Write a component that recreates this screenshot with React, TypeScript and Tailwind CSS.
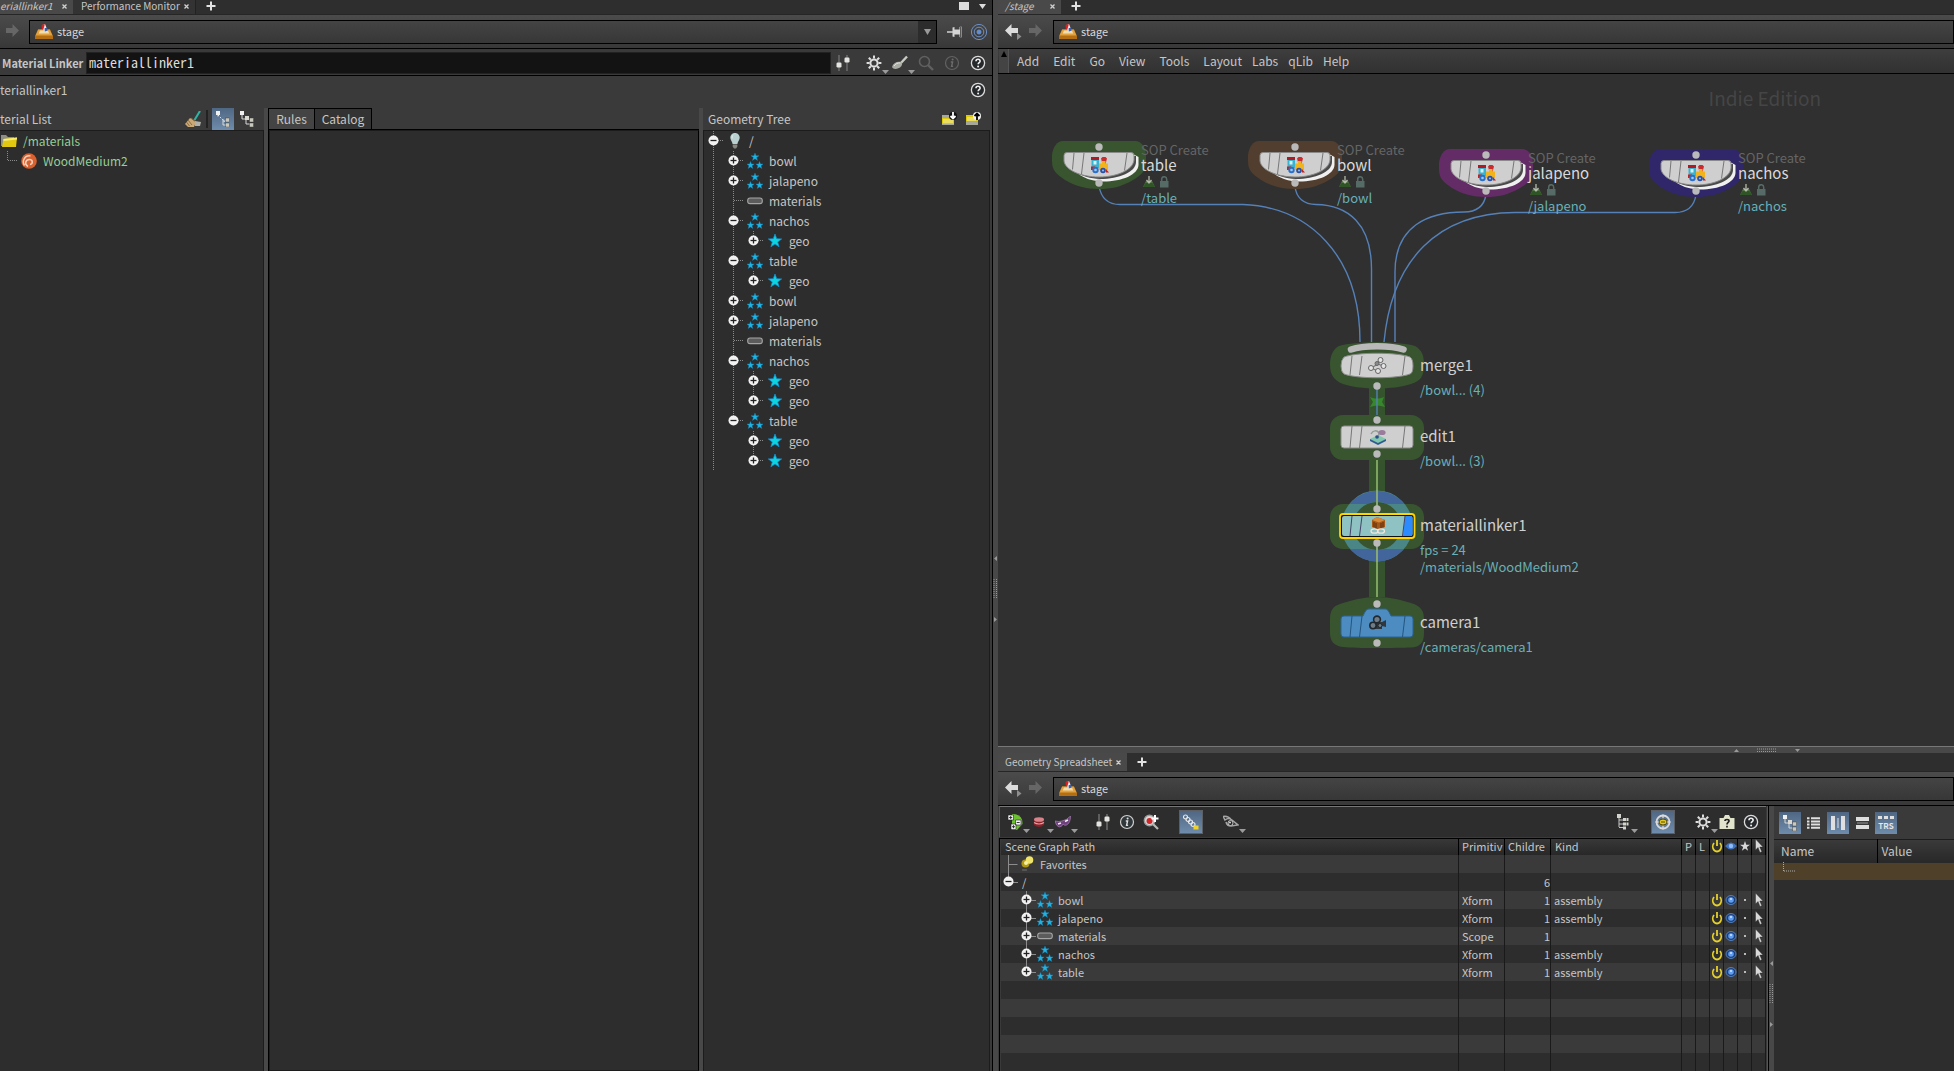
import type { ReactNode } from 'react';

type Children = { children?: ReactNode };

/* ---------- small shared icons ---------- */

const HelpIcon = () => (
  <svg width="16" height="16" viewBox="0 0 16 16" fill="none">
    <circle cx="8" cy="8" r="6.6" fill="#26292c" stroke="#dcdcdc" strokeWidth="1.3" />
    <path d="M6 6.3c0-1.3.9-2 2-2s2.1.7 2.1 1.9c0 1.5-1.9 1.5-1.9 3" stroke="#f0f0f0" strokeWidth="1.6" />
    <circle cx="8.1" cy="11.4" r="1" fill="#f0f0f0" />
  </svg>
);

const InfoIcon = ({ dim = false }: { dim?: boolean }) => (
  <svg width="16" height="16" viewBox="0 0 16 16" fill="none">
    <circle cx="8" cy="8" r="6.5" stroke={dim ? '#626262' : '#d0d0d0'} strokeWidth="1.2" fill={dim ? 'none' : '#30383c'} />
    <path d="M6.8 7h1.8L7.6 11.4h1.5" stroke={dim ? '#6c6c6c' : '#e0e0e0'} strokeWidth="1.4" />
    <circle cx="8.6" cy="4.6" r="1" fill={dim ? '#6c6c6c' : '#e0e0e0'} />
  </svg>
);

const SlidersIcon = () => (
  <svg width="16" height="16" viewBox="0 0 16 16">
    <path d="M4 0v16M12 0v16" stroke="#8f8f8f" strokeWidth="1.6" />
    <path d="M4 0v16M12 0v16" stroke="#1c1c1c" strokeWidth="0.6" />
    <rect x="1.5" y="7.5" width="5" height="5" rx="1.2" fill="#e4e4e0" />
    <rect x="9.5" y="2.5" width="5" height="5" rx="1.2" fill="#e4e4e0" />
  </svg>
);

const GearIcon = () => (
  <svg width="16" height="16" viewBox="0 0 16 16" fill="none" stroke="#dedede">
    <circle cx="8" cy="8" r="3.6" strokeWidth="2" />
    <path d="M8 .6v3M8 12.4v3M.6 8h3M12.4 8h3M2.8 2.8l2 2M11.2 11.2l2 2M2.8 13.2l2-2M11.2 4.8l2-2" strokeWidth="2" />
  </svg>
);

const StageIcon = () => (
  <svg width="18" height="16" viewBox="0 0 18 16">
    <path d="M3 5.5h12l3 6.5v3H0v-3z" fill="#b46f13" />
    <path d="M3.2 5.5h11.6l2.6 6H.6z" fill="#e2a23f" />
    <path d="M5 6.5h8l1.2 3H3.8z" fill="#f2dcae" />
    <path d="M7 1.2l3-1.2 2.6 6.6-3.6 1z" fill="#ececf2" />
    <path d="M6.6 1.6C7 .4 9 0 9.8.6L8.4 5.2 6.8 5z" fill="#d92222" />
    <path d="M9.6 4.2l2.4-.6.8 3-3 .8z" fill="#3d5fa8" />
  </svg>
);

const StarsIcon = () => (
  <svg width="16" height="16" viewBox="0 0 16 16" fill="#1fb4e2" stroke="#1685bd" strokeWidth="0.4">
    <path d="M8 0l1 2.7h3l-2.4 1.8.9 2.9L8 5.7 5.5 7.4l.9-2.9L4 2.7h3z" />
    <path d="M3.5 8.5l1 2.5h2.7L5 12.7l.8 2.8-2.3-1.6-2.3 1.6.8-2.8L0 11h2.6z" />
    <path d="M12.5 8.5l1 2.5h2.5L14 12.7l.8 2.8-2.3-1.6-2.3 1.6.8-2.8L8.9 11h2.7z" />
  </svg>
);

const StarIcon = () => (
  <svg width="16" height="16" viewBox="0 0 16 16">
    <path d="M8 1l1.700 4.700 5 .2-4 3.100 1.400 4.800L8 11l-4.100 2.800L5.300 9l-4-3.100 5-.2z" fill="#0bd3e0" stroke="#128fd6" strokeWidth="0.7" />
  </svg>
);

const ScopeIcon = () => (
  <svg width="16" height="16" viewBox="0 0 16 16">
    <rect x="0.7" y="5" width="14.6" height="5.6" rx="2.4" fill="#5c5c5c" stroke="#a5a5a5" strokeWidth="1.1" />
  </svg>
);

const BulbIcon = () => (
  <svg width="16" height="16" viewBox="0 0 16 16">
    <path d="M8 0c3 0 4.700 2.200 4.700 4.800 0 2.400-1.900 3.500-2.300 6.200H5.600C5.200 8.300 3.300 7.200 3.300 4.800 3.300 2.200 5 0 8 0z" fill="#b9d0d0" />
    <path d="M6.300 2c-1 .7-1.400 2-1.100 3.400" stroke="#e8f4f4" fill="none" />
    <path d="M5.700 11.500h4.600v2.300L9 15.500H7l-1.300-1.700z" fill="#878782" />
  </svg>
);

const CaretDown = () => (
  <svg className="absolute -right-1 bottom-0" width="7" height="4" viewBox="0 0 7 4">
    <path d="M0 0h7L3.500 4z" fill="#9b9b9b" />
  </svg>
);

const ArrowIcon = ({ back = false }: { back?: boolean }) => (
  <svg width="17" height="17" viewBox="0 0 17 17">
    {back ? (
      <>
        <path d="M0 7.500L6.500 1v4H13v5H6.500v4z" fill="#dcdcdc" />
        <path d="M12 10l4.500 3.500L12 17z" fill="#8e8e8e" />
      </>
    ) : (
      <path d="M14 7.500L7.500 1v4H1v5h6.500v4z" fill="#666" />
    )}
  </svg>
);

const TreeModeIcon = ({ dotted = false }: { dotted?: boolean }) => (
  <svg width="16" height="16" viewBox="0 0 16 16">
    {dotted ? (
      <path d="M3 4l7 7M3 4v3" stroke="#e8e8e8" strokeDasharray="1.5 1.5" />
    ) : (
      <path d="M3 4v4h4v5h5M7 8h2" stroke="#d8d8d8" fill="none" />
    )}
    {dotted && <path d="M8 8v6h3M8 10h3" stroke="#d8d8d8" fill="none" />}
    <rect x="1" y="0" width="4" height="4" fill="#f0f0f0" />
    {!dotted && <rect x="6" y="5" width="4" height="4" fill="#d8d8d0" />}
    <rect x="10.5" y="7" width="4" height="4" fill="#c9c9bf" stroke="#333" strokeWidth="0.4" />
    <rect x="10.5" y="12" width="4" height="4" fill="#c9c9bf" stroke="#333" strokeWidth="0.4" />
  </svg>
);

/* ---------- generic pieces ---------- */

type IconButtonProps = Children & { label: string; active?: boolean; framed?: boolean; menu?: boolean };

function IconButton({ label, active = false, framed = false, menu = false, children }: IconButtonProps) {
  return (
    <button
      type="button"
      aria-label={label}
      className={`relative flex h-[22px] w-[22px] shrink-0 items-center justify-center ${
        active ? 'bg-gradient-to-b from-[#4f6783] to-[#6f8cac]' : ''
      } ${framed ? 'ring-1 ring-[#5c5f63]' : ''}`}
    >
      {children}
      {menu && <CaretDown />}
    </button>
  );
}

function Tab({ label, className }: { label: string; className: string }) {
  return (
    <div className={`flex h-full items-center justify-between text-[10px] ${className}`}>
      <button type="button" className="whitespace-nowrap leading-[14px]">{label}</button>
      <button type="button" aria-label={`Close ${label}`}>
        <svg width="5" height="5" viewBox="0 0 5 5">
          <path d="M.5.5l4 4M4.500.5l-4 4" stroke="#d0d0d0" strokeWidth="1.3" />
        </svg>
      </button>
    </div>
  );
}

const AddTab = () => (
  <button type="button" aria-label="New tab" className="ml-[10px]">
    <svg width="10" height="10" viewBox="0 0 10 10">
      <path d="M5 .5v9M.5 5h9" stroke="#e2e2e2" strokeWidth="2" />
    </svg>
  </button>
);

function PathField({ id }: { id: string }) {
  return (
    <div className="relative flex h-6 min-w-0 flex-1 items-center border border-black bg-gradient-to-b from-[#444] to-[#373737] pl-[5px]">
      <StageIcon />
      <label htmlFor={id} className="sr-only">Path</label>
      <select id={id} className="h-full min-w-0 flex-1 appearance-none bg-transparent pb-[2px] pl-1 text-[11px] leading-[18px] text-[#d6d6d6] outline-none">
        <option>stage</option>
      </select>
    </div>
  );
}

function PathBar({ id }: { id: string }) {
  return (
    <div className="flex h-[34px] shrink-0 items-center border-b border-black bg-gradient-to-b from-[#4b4b4b] to-[#383838]">
      <button type="button" aria-label="Back" className="ml-[7px]"><ArrowIcon back /></button>
      <button type="button" aria-label="Forward" className="ml-[6px] mr-2"><ArrowIcon /></button>
      <PathField id={id} />
    </div>
  );
}

/* ---------- left pane ---------- */

type TreeRow = { name: string; depth: number; icon: ReactNode; toggle?: '+' | '-'; guides: boolean[]; last?: boolean };

const star3 = <StarsIcon />;
const star1 = <StarIcon />;

const treeRows: TreeRow[] = [
  { name: '/', depth: 0, icon: <BulbIcon />, toggle: '-', guides: [] },
  { name: 'bowl', depth: 1, icon: star3, toggle: '+', guides: [true] },
  { name: 'jalapeno', depth: 1, icon: star3, toggle: '+', guides: [true] },
  { name: 'materials', depth: 1, icon: <ScopeIcon />, guides: [true] },
  { name: 'nachos', depth: 1, icon: star3, toggle: '-', guides: [true] },
  { name: 'geo', depth: 2, icon: star1, toggle: '+', guides: [true, true], last: true },
  { name: 'table', depth: 1, icon: star3, toggle: '-', guides: [true] },
  { name: 'geo', depth: 2, icon: star1, toggle: '+', guides: [true, true], last: true },
  { name: 'bowl', depth: 1, icon: star3, toggle: '+', guides: [true] },
  { name: 'jalapeno', depth: 1, icon: star3, toggle: '+', guides: [true] },
  { name: 'materials', depth: 1, icon: <ScopeIcon />, guides: [true] },
  { name: 'nachos', depth: 1, icon: star3, toggle: '-', guides: [true] },
  { name: 'geo', depth: 2, icon: star1, toggle: '+', guides: [true, true] },
  { name: 'geo', depth: 2, icon: star1, toggle: '+', guides: [true, true], last: true },
  { name: 'table', depth: 1, icon: star3, toggle: '-', guides: [true], last: true },
  { name: 'geo', depth: 2, icon: star1, toggle: '+', guides: [true, false] },
  { name: 'geo', depth: 2, icon: star1, toggle: '+', guides: [true, false], last: true },
];

function Toggle({ sign, cx, cy }: { sign: '+' | '-'; cx: number; cy: number }) {
  return (
    <g>
      <circle cx={cx} cy={cy} r="5" fill="#f2f2f2" />
      <path d={`M${cx - 3} ${cy}h6`} stroke="#222" strokeWidth="1.3" />
      {sign === '+' && <path d={`M${cx} ${cy - 3}v6`} stroke="#222" strokeWidth="1.3" />}
    </g>
  );
}

function TreeItem({ row }: { row: TreeRow }) {
  return (
    <li className="flex h-5 items-center">
      {row.guides.map((on, i) => (
        <svg key={i} width="20" height="20" viewBox="0 0 20 20">
          {on && <path d="M9.500 0v20" stroke="#8a8a8a" strokeDasharray="1 1" />}
        </svg>
      ))}
      <svg width="23" height="20" viewBox="0 0 23 20" className="shrink-0">
        <path d={row.last ? 'M9.500 0v9' : 'M9.500 0v20'} stroke="#8a8a8a" strokeDasharray="1 1" />
        <path d="M10 9.500h10" stroke="#8a8a8a" strokeDasharray="1 1" />
        {row.toggle && <Toggle sign={row.toggle} cx={9.5} cy={9.5} />}
      </svg>
      {row.icon}
      <span className="ml-[6px] text-[12px] leading-5">{row.name}</span>
    </li>
  );
}

function ParameterHeader() {
  return (
    <div className="flex h-[27px] shrink-0 items-center border-b border-black bg-[#3a3a3a] pt-[2px]">
      <label htmlFor="node-name" className="w-[86px] shrink-0 whitespace-nowrap pl-[2px] text-[11px] font-bold leading-5">
        Material Linker
      </label>
      <input
        id="node-name"
        defaultValue="materiallinker1"
        className="h-[22px] min-w-0 flex-1 border border-[#222] bg-[#131313] px-[2px] pb-[2px] font-['Noto_Sans_Mono_CJK_SC','DejaVu_Sans_Mono',monospace] text-[14px] text-[#dcdcdc] outline-none"
      />
      <div className="flex items-center pl-[1px] pr-[3px]">
        <IconButton label="Sliders"><SlidersIcon /></IconButton>
        <span className="w-[9px]" />
        <IconButton label="Gear menu" menu><GearIcon /></IconButton>
        <span className="w-1" />
        <IconButton label="Take menu" menu>
          <svg width="16" height="16" viewBox="0 0 16 16">
            <path d="M8 9L15 1.500" stroke="#c8ccc4" strokeWidth="2.4" />
            <path d="M0 12c1-4 5-6 9-5 2 1 1 4-1 5.500-3 2-7 2-8-.5z" fill="#a9aca4" />
            <path d="M2 11c1-2 4-3.500 6.500-3" stroke="#e8e8e0" fill="none" />
          </svg>
        </IconButton>
        <span className="w-1" />
        <IconButton label="Search">
          <svg width="16" height="16" viewBox="0 0 16 16" fill="none" stroke="#606060">
            <circle cx="6.5" cy="6.5" r="5" strokeWidth="1.6" />
            <path d="M10 10l5 5" strokeWidth="2.4" />
          </svg>
        </IconButton>
        <span className="w-1" />
        <IconButton label="Info"><InfoIcon dim /></IconButton>
        <span className="w-1" />
        <IconButton label="Help"><HelpIcon /></IconButton>
      </div>
    </div>
  );
}

function MaterialList() {
  return (
    <section className="flex w-[264px] shrink-0 flex-col">
      <header className="flex h-[22px] shrink-0 items-center">
        <h2 className="flex-1 whitespace-nowrap text-[12px] leading-5">terial List</h2>
        <IconButton label="Clean up">
          <svg width="16" height="16" viewBox="0 0 16 16">
            <path d="M15 0L9.500 9" stroke="#2fb5a5" strokeWidth="2" />
            <path d="M5 7l6 4-2 5H3l-3-3z" fill="#c9a877" />
            <path d="M6 7l5 4M3 9l4 5M1.500 11l3 4" stroke="#8c6c3f" />
            <path d="M10 10l6 1-1 4-5 0z" fill="#aeb0aa" />
          </svg>
        </IconButton>
        <span className="ml-[2px] mr-1 h-[18px] w-[2px] bg-[#222]" />
        <IconButton label="Tree view" active><TreeModeIcon dotted /></IconButton>
        <span className="w-[2px]" />
        <IconButton label="Path view"><TreeModeIcon /></IconButton>
        <span className="w-[6px]" />
      </header>
      <ul className="flex-1 border-t border-r border-[#1c1c1c] bg-[#2d2d2d] text-[12px] text-[#97cf97]">
        <li className="flex h-5 items-center pl-[1px]">
          <svg width="16" height="14" viewBox="0 0 16 14">
            <path d="M0 1h5l2 2h6v9H0z" fill="#8e8e84" />
            <path d="M2.500 5L16 3.500 15 13H1z" fill="#e3c812" />
            <path d="M2.500 5L16 3.500v2L2.500 7z" fill="#f6ec76" />
          </svg>
          <span className="ml-[6px] leading-5">/materials</span>
        </li>
        <li className="flex h-5 items-center pl-[7px]">
          <svg width="14" height="20" viewBox="0 0 14 20">
            <path d="M.5 0v10M1 9.500h10" stroke="#8a8a8a" strokeDasharray="1 1" fill="none" />
          </svg>
          <svg width="16" height="16" viewBox="0 0 16 16" fill="none">
            <circle cx="8" cy="8" r="7.8" fill="#d9602f" />
            <path d="M3.500 12.500C0.500 8 4 2 9.500 3M7 13.500C3 11.500 4.500 6 9 6.500C12 7 12 11 9 11.500" stroke="#f6d3bd" strokeWidth="1.5" />
          </svg>
          <span className="ml-[6px] leading-5">WoodMedium2</span>
        </li>
      </ul>
    </section>
  );
}

function NoteIcon({ up = false }: { up?: boolean }) {
  return (
    <svg width="16" height="14" viewBox="0 0 16 14">
      <path d="M0 3h12v10H0z" fill="#a7a89c" />
      <path d={up ? 'M0 3h12v6H0z' : 'M0 6h12v6H0z'} fill="#dcc90c" />
      <path d={up ? 'M1 6h9M1 8h9' : 'M1 8h10M1 10h10'} stroke="#f7f2b4" />
      <circle cx="11" cy="4" r="4" fill={up ? '#f3f3f3' : '#111'} />
      <path d={up ? 'M11 8V2M8.500 4L11 1.500 13.500 4' : 'M11 0v6M8.500 4L11 6.500 13.500 4'} stroke={up ? '#000' : '#fff'} strokeWidth="1.8" fill="none" />
    </svg>
  );
}

function LinkerPane() {
  return (
    <section className="flex min-w-0 flex-col border-r border-black bg-[#3a3a3a]">
      <div className="flex h-[15px] shrink-0 items-center border-b border-[#262626] bg-[#2e2e2e]">
        <Tab label="eriallinker1" className="w-[73px] bg-[#494949] pb-[2px] pr-[6px] italic" />
        <Tab label="Performance Monitor" className="w-[123px] border-r border-[#222] bg-[#333] pb-[2px] pl-2 pr-[6px]" />
        <div className="flex h-full flex-1 items-center pb-[2px]">
          <AddTab />
          <span className="ml-auto h-2 w-[10px] bg-[#dcdcdc]" />
          <svg className="ml-[10px] mr-[6px]" width="7" height="5" viewBox="0 0 7 5"><path d="M0 0h7L3.500 5z" fill="#ddd" /></svg>
        </div>
      </div>
      <div className="flex h-[34px] shrink-0 items-center border-b border-black bg-gradient-to-b from-[#4b4b4b] to-[#383838]">
        <button type="button" aria-label="Forward" className="ml-[5px] mr-[7px]"><ArrowIcon /></button>
        <PathField id="linker-path" />
        <span className="-ml-[19px] relative flex h-[22px] w-[18px] items-center justify-center bg-[#2c2c2c]">
          <svg width="7" height="6" viewBox="0 0 7 6"><path d="M0 0h7L3.500 6z" fill="#9a9a9a" /></svg>
        </span>
        <span className="w-[8px]" />
        <IconButton label="Pin">
          <svg width="16" height="14" viewBox="0 0 16 14">
            <path d="M0 7h6" stroke="#ddd" strokeWidth="1.4" />
            <path d="M5.500 2.500L7.500 2v2.500h5V2l2-.5v11l-2-.5V9.500h-5V12l-2-.5z" fill="#d4d4d4" />
            <path d="M13.500 2v10" stroke="#555" />
          </svg>
        </IconButton>
        <span className="w-[2px]" />
        <IconButton label="Follow selection">
          <svg width="18" height="18" viewBox="0 0 18 18" fill="none" stroke="#6d8fc4">
            <circle cx="9" cy="9" r="7.6" />
            <circle cx="9" cy="9" r="4.8" />
            <circle cx="9" cy="9" r="2" fill="#5a8fe0" />
          </svg>
        </IconButton>
        <span className="w-[2px]" />
      </div>
      <ParameterHeader />
      <div className="mb-1 flex h-7 shrink-0 items-center justify-between pr-[3px]">
        <span className="text-[12px] leading-5">teriallinker1</span>
        <IconButton label="Linker help"><HelpIcon /></IconButton>
      </div>

      <div className="flex min-h-0 flex-1">
        <MaterialList />
        <div className="w-1 shrink-0 bg-[#484848]" />
        <section className="flex min-w-0 flex-1 flex-col border-l border-black">
          <div className="flex h-[22px] shrink-0 border-b border-black text-[12px]">
            <button type="button" className="w-[46px] border-t border-r border-black bg-[#444] leading-5">Rules</button>
            <button type="button" className="w-[57px] border-t border-r border-black bg-[#333] leading-5">Catalog</button>
          </div>
          <div className="flex-1 border border-[#1c1c1c] border-r-black bg-[#2d2d2d]" />
        </section>
        <div className="w-1 shrink-0 bg-[#484848]" />
        <section className="flex w-[289px] shrink-0 flex-col pr-[2px]">
          <header className="flex h-[22px] shrink-0 items-center">
            <h2 className="flex-1 pl-[5px] text-[12px] leading-5">Geometry Tree</h2>
            <IconButton label="Load"><NoteIcon /></IconButton>
            <span className="w-[2px]" />
            <IconButton label="Save"><NoteIcon up /></IconButton>
            <span className="w-[5px]" />
          </header>
          <ul className="flex-1 border border-b-0 border-[#1c1c1c] bg-[#2d2d2d]">
            {treeRows.map((row, i) => (
              <TreeItem key={i} row={row} />
            ))}
          </ul>
        </section>
      </div>
    </section>
  );
}

/* ---------- network editor ---------- */

const Dot = ({ cy }: { cy: number }) => <circle cx="0" cy={cy} r="3.7" fill="#bababa" />;

const Train = () => (
  <g>
    <path d="M-8 -9h8v3h-8z" fill="#b01822" />
    <path d="M-7.500 -6h7.500v8h-7.500z" fill="#3bb3d0" />
    <path d="M-5.500 -5h3v3.500h-3z" fill="#d7eef2" />
    <path d="M2 -7.500l1.500-1.500h3L8 -7.500 6.500 -2h-3z" fill="#c92c2c" />
    <path d="M0 -2.500h3V-5h3.500v2.500H9V4H0z" fill="#f1b41c" />
    <path d="M-8 .500h4V4h-4z" fill="#c02222" />
    <circle cx="-3.500" cy="4" r="3.2" fill="#2d6fc4" />
    <circle cx="-3.500" cy="4" r="1.300" fill="#9fc8ee" />
    <circle cx="4" cy="4.500" r="2.800" fill="#2b4fa0" />
    <circle cx="4" cy="4.500" r="1.100" fill="#8fb4e6" />
    <path d="M7 3l3 3.500H7z" fill="#c02222" />
  </g>
);

const Slats = ({ top, bottom, color = '#777' }: { top: number; bottom: number; color?: string }) => (
  <path
    d={`M-25 ${top}L-27 ${bottom}M-15 ${top}L-17.500 ${bottom}M28 ${top}L25.500 ${bottom}`}
    stroke={color}
    strokeWidth="1"
  />
);

type NodeProps = { x: number; y: number; shape: ReactNode; children: ReactNode };

function GraphNode({ x, y, shape, children }: NodeProps) {
  return (
    <div className="absolute" style={{ left: x, top: y }}>
      <svg className="absolute -left-12 -top-9" width="96" height="72" viewBox="-48 -36 96 72">
        {shape}
      </svg>
      <div className="absolute left-[42px] whitespace-nowrap">{children}</div>
    </div>
  );
}

const SopShape = ({ halo }: { halo: string }) => (
  <>
    <path d="M-36 -25H36C43 -25 47 -18 47 -10V-3C46 6 42 9 34 14C22 21 12 23 0 23C-13 23 -24 20 -34 14C-43 8 -47 4 -47 -5V-11C-46 -19 -42 -25 -36 -25Z" fill={halo} />
    <path d="M-30 -8C-28 4 -18 14 2 15.500C22 16 39 9 39.500 -1V-9L34 -12Z" fill="#f0f0f0" />
    <path d="M-34 -8C-32 4 -18 12 1 13C20 13 37 6 37 -4V-10Z" fill="#4a4a4a" />
    <path d="M-32 -13.500H32Q35 -13.500 35 -10.500V-6C34 4 18 11 0 11C-18 11 -34 4 -35 -5V-10.500Q-35 -13.500 -32 -13.500Z" fill="#cfcfcf" stroke="#8a8a8a" />
    <path d="M-25 -13L-26.500 3.500M-15 -13L-17.500 8M28 -13L25.500 4.500" stroke="#777" />
    <Train />
    <Dot cy={-19} />
    <Dot cy={17} />
  </>
);

const sopNodes = [
  { name: 'table', x: 101, y: 92, halo: '#39552f' },
  { name: 'bowl', x: 297, y: 92, halo: '#513e2f' },
  { name: 'jalapeno', x: 488, y: 100, halo: '#642c66' },
  { name: 'nachos', x: 698, y: 100, halo: '#30276a' },
];

const SopLabel = ({ name }: { name: string }) => (
  <div className="-mt-6">
    <p className="text-[13px] leading-4 text-[#656565]">SOP Create</p>
    <p className="text-[15px] leading-[14px] text-[#dadada]">{name}</p>
    <svg className="ml-[2px] mt-[4px]" width="28" height="12" viewBox="0 0 28 12">
      <path d="M3 5h6l3 6H0z" fill="#4f7340" />
      <path d="M2.500 7h7l2.500 4H0z" fill="#2f5526" />
      <path d="M6 0v6M3.500 4L6 7l2.500-3" stroke="#b3bbaa" strokeWidth="1.3" fill="none" />
      <rect x="17" y="5" width="8.500" height="6.500" fill="#566b66" />
      <path d="M18.700 5V3.200a2.500 2.500 0 0 1 5 0V5" stroke="#566b66" strokeWidth="1.5" fill="none" />
    </svg>
    <p className="mt-[2px] text-[13px] leading-4 text-[#69b0b8]">/{name}</p>
  </div>
);

const NodeLabel = ({ name, lines }: { name: string; lines: string[] }) => (
  <div className="-mt-[13px] pl-[1px]">
    <p className="mb-1 text-[15px] leading-6 text-[#d0d0d0]">{name}</p>
    {lines.map((line) => (
      <p key={line} className="text-[13px] leading-[17px] text-[#69b0b8]">{line}</p>
    ))}
  </div>
);

const halo = '#38552f';

const MergeShape = () => (
  <>
    <path d="M-38 -20C-20 -25 20 -25 38 -20C45 -16 47 -10 47 -2C47 10 44 15 34 18C16 24 -16 24 -34 18C-44 14 -47 8 -47 -2C-47 -10 -44 -17 -38 -20Z" fill={halo} />
    <path d="M-26 -16.500C-14 -21 14 -21 26.500 -16.500" stroke="#b9b9b9" strokeWidth="6.5" strokeLinecap="round" fill="none" />
    <path d="M-33 -9C-20 -14 20 -14 33 -9Q36 -7 36 0T33 8C20 13 -20 13 -33 8Q-36 6 -36 0T-33 -9Z" fill="#cfcfcf" stroke="#8a8a8a" />
    <Slats top={-10} bottom={9} />
    <path d="M-6 2L1 -2L3 -6M1 -2L6 0M-6 2L1 5" stroke="#777" strokeWidth="1.1" fill="none" />
    <g fill="#e4e4e4" stroke="#666" strokeWidth="1">
      <circle cx="3.500" cy="-6" r="2.5" />
      <circle cx="6.500" cy="0" r="2.5" />
      <circle cx="0" cy="-2.500" r="2" fill="#8a8a8a" />
      <circle cx="-6" cy="2" r="2.500" />
      <circle cx="1" cy="5" r="2.500" />
    </g>
    <Dot cy={20} />
  </>
);

const EditShape = () => (
  <>
    <rect x="-47" y="-22" width="94" height="45" rx="13" fill={halo} />
    <rect x="-36" y="-11" width="72" height="22" rx="3" fill="#cfcfcf" stroke="#8a8a8a" />
    <Slats top={-11} bottom={11} />
    <path d="M-7 2L1 -2L9 2L1 7z" fill="#7fc8ae" />
    <path d="M-7 2L1 6L9 2V4L1 8L-7 4z" fill="#2f5a90" />
    <path d="M-6 -3C-4 -7 0 -7 2 -4L1 1" stroke="#8f9f98" strokeWidth="1.5" fill="none" />
    <ellipse cx="5" cy="-4.500" rx="3.600" ry="2.600" fill="#9a7b9c" />
    <circle cx="0" cy="0" r="1.800" fill="#2b4f8a" />
    <Dot cy={-17} />
    <Dot cy={17} />
  </>
);

const LinkerShape = () => (
  <>
    <rect x="-47" y="-22" width="94" height="45" rx="13" fill={halo} />
    <circle r="29.7" fill="none" stroke="#4a8686" strokeWidth="11.4" />
    <path d="M-27.400 -22A35.400 35.400 0 0 1 27.400 -22L10 -22A24 24 0 0 0 -10 -22ZM-27 23A35.400 35.400 0 0 0 27 23L7 23A24 24 0 0 1 -7 23Z" fill="#42669b" />
    <rect x="-37" y="-12" width="74.5" height="24" rx="3" fill="#111" stroke="#ffd400" strokeWidth="1.8" />
    <rect x="-35" y="-10" width="70.5" height="20" rx="2" fill="#8fc2c2" />
    <path d="M28 -10H34Q35.500 -10 35.500 -8V8Q35.500 10 34 10H26Z" fill="#2c8cff" />
    <Slats top={-10} bottom={10} color="#446" />
    <path d="M-5 -6L0 -9L8 -6V1L2 4L-5 1z" fill="#a3581a" />
    <path d="M-5 -6L0 -9L8 -6L2 -3.500z" fill="#d88a3a" />
    <path d="M-3 -4v5M-1 -3v6M4 -3v5M6 -4v5" stroke="#5b2b08" />
    <ellipse cx="-2.500" cy="5" rx="3.500" ry="2.200" fill="none" stroke="#f0e6dc" strokeWidth="1.3" />
    <ellipse cx="4" cy="5" rx="3.500" ry="2.200" fill="none" stroke="#f0e6dc" strokeWidth="1.3" />
    <path d="M0 -36V-20M0 20V36" stroke="#86a878" strokeWidth="2" />
    <Dot cy={-17} />
    <Dot cy={17} />
  </>
);

const CameraShape = () => (
  <>
    <path d="M-37 -19C-24 -23 -14 -26 0 -26C14 -26 24 -23 37 -19C44 -16 47 -12 47 -4V10C47 20 43 24 34 24.500C20 25 -20 25.500 -34 24C-43 23 -47 18 -47 10V-4C-47 -12 -44 -17 -37 -19Z" fill={halo} />
    <path d="M-33 -7H-14C-12 -11 -11 -14 -8 -14H8C11 -14 12 -11 14 -7H33Q36 -7 36 -4V11Q36 14 33 14H-33Q-36 14 -36 11V-4Q-36 -7 -33 -7Z" fill="#4d8cc0" stroke="#2c6396" />
    <path d="M-25 -7L-27 14M-15 -7L-17.500 14M28 -7L25.500 14" stroke="#23557f" />
    <path d="M-3 -1H5L9 -3V4L5 3V6H-3z" fill="#30383e" />
    <circle cx="0" cy="-3.500" r="3.400" fill="#6e7d88" stroke="#22292e" strokeWidth="1.6" />
    <circle cx="-4" cy="2.500" r="3.200" fill="#6e7d88" stroke="#22292e" strokeWidth="1.6" />
    <circle cx="3" cy="2.500" r="2" fill="#6e7d88" stroke="#22292e" />
    <Dot cy={-19} />
    <Dot cy={20} />
  </>
);

const mainMenus = ['Add', 'Edit', 'Go', 'View', 'Tools', 'Layout'];
const extraMenus = ['Labs', 'qLib', 'Help'];

function NetworkPane() {
  return (
    <section className="flex min-h-0 flex-1 flex-col">
      <div className="flex h-[15px] shrink-0 items-center border-b border-[#262626] bg-[#2e2e2e]">
        <Tab label="/stage" className="w-[63px] bg-[#494949] pb-[2px] pl-[7px] pr-[6px] italic" />
        <div className="flex h-full items-center pb-[2px]"><AddTab /></div>
      </div>
      <PathBar id="network-path" />
      <nav className="flex h-[25px] shrink-0 items-center border-b border-black bg-gradient-to-b from-[#3e3e3e] to-[#313131] text-[12px] leading-5">
        <span className="ml-[1px] mr-2 flex h-6 w-[10px] items-start justify-center border-r border-[#555] bg-[#444] pt-[2px]">
          <svg width="6" height="6" viewBox="0 0 6 6"><path d="M0 6h6L3 0z" fill="#000" /></svg>
        </span>
        <div className="flex gap-[14px]">
          {mainMenus.map((menu) => (
            <button key={menu} type="button">{menu}</button>
          ))}
        </div>
        <div className="ml-[10px] flex gap-[10px]">
          {extraMenus.map((menu) => (
            <button key={menu} type="button">{menu}</button>
          ))}
        </div>
      </nav>
      <div className="relative min-h-0 flex-1 overflow-hidden bg-[#303030]">
        <p className="absolute right-[133px] top-[10px] text-[19px] leading-7 text-[#454545]">Indie Edition</p>
        <svg className="absolute left-0 top-0" width="800" height="600" viewBox="0 0 800 600" fill="none">
          <g stroke="#5580b8" strokeWidth="1.4">
            <path d="M101 112C103 124 110 130.500 122 130.500H245C310 133 362 180 362 268" />
            <path d="M297 112C298 124 306 130.500 318 130.500C350 131 373.500 150 373.500 195V268" />
            <path d="M488 121C486 132 478 138 466 138C430 138 397 152 397 198V268" />
            <path d="M698 121C696 133 689 138.500 677 138.500H517C440 139 394 185 386 268" />
          </g>
          <path d="M371 312h16v34h-16zM371 386h16v44h-16zM371 475h16v48h-16z" fill="#35542d" />
          <path d="M372 323c5 2 9 2 14 0l-2 5 3 5c-5-2-10-2-15 0l3-5z" fill="#36882c" />
          <path d="M379 312v34" stroke="#5580b8" strokeWidth="1.4" />
          <path d="M379 380v58M379 469v60" stroke="#7ba35f" strokeWidth="2" />
        </svg>
        {sopNodes.map((n) => (
          <GraphNode key={n.name} x={n.x} y={n.y} shape={<SopShape halo={n.halo} />}>
            <SopLabel name={n.name} />
          </GraphNode>
        ))}
        <GraphNode x={379} y={292} shape={<MergeShape />}>
          <NodeLabel name="merge1" lines={['/bowl... (4)']} />
        </GraphNode>
        <GraphNode x={379} y={363} shape={<EditShape />}>
          <NodeLabel name="edit1" lines={['/bowl... (3)']} />
        </GraphNode>
        <GraphNode x={379} y={452} shape={<LinkerShape />}>
          <NodeLabel name="materiallinker1" lines={['fps = 24', '/materials/WoodMedium2']} />
        </GraphNode>
        <GraphNode x={379} y={549} shape={<CameraShape />}>
          <NodeLabel name="camera1" lines={['/cameras/camera1']} />
        </GraphNode>
      </div>
    </section>
  );
}

/* ---------- geometry spreadsheet ---------- */

const PowerIcon = () => (
  <svg className="mx-auto" width="12" height="14" viewBox="0 0 12 14" fill="none" stroke="#e6d02a" strokeWidth="1.8">
    <path d="M3 4a4.200 5 0 1 0 6 0M6 1v6" />
  </svg>
);

const EyeIcon = () => (
  <svg className="mx-auto" width="12" height="12" viewBox="0 0 12 12">
    <ellipse cx="6" cy="6" rx="5" ry="4.500" fill="#1d3f78" stroke="#5d90d8" strokeWidth="0.8" />
    <circle cx="6" cy="6" r="2.800" fill="#5f9df0" />
    <circle cx="6" cy="5" r="1" fill="#d4e6ff" />
  </svg>
);

const CursorIcon = () => (
  <svg className="mx-auto" width="10" height="14" viewBox="0 0 10 14">
    <path d="M1.500 0v11l2.500-2.500L6 13.500l1.800-.8L5.800 8h3.200z" fill="#d8d8d8" stroke="#222" strokeWidth="0.4" />
  </svg>
);

const sheetRows = [
  { name: 'bowl', type: 'Xform', kind: 'assembly' },
  { name: 'jalapeno', type: 'Xform', kind: 'assembly' },
  { name: 'materials', type: 'Scope', kind: '' },
  { name: 'nachos', type: 'Xform', kind: 'assembly' },
  { name: 'table', type: 'Xform', kind: 'assembly' },
];

const cell = 'h-[18px] overflow-hidden border-r border-[#1a1a1a] p-0';
const head = 'h-4 overflow-hidden whitespace-nowrap border-r border-black p-0 text-left align-top font-normal';
const stripe = 'odd:bg-[#3a3a3a] even:bg-[#2d2d2d]';

function BlankCells({ count }: { count: number }) {
  return (
    <>
      {Array.from({ length: count }, (_, i) => (
        <td key={i} className={cell} />
      ))}
    </>
  );
}

function SceneTable() {
  return (
    <table className="w-full table-fixed border-collapse text-[11px] leading-[17px]">
      <colgroup>
        <col />
        <col className="w-[46px]" />
        <col className="w-[46px]" />
        <col className="w-[131px]" />
        <col className="w-[14px]" />
        <col className="w-[14px]" />
        <col className="w-[14px]" />
        <col className="w-[14px]" />
        <col className="w-[14px]" />
        <col className="w-[14px]" />
      </colgroup>
      <thead>
        <tr className="bg-gradient-to-b from-[#383838] to-[#282828] leading-[14px]">
          <th className={`${head} pl-1`}>Scene Graph Path</th>
          <th className={`${head} pl-[3px]`}>Primitiv</th>
          <th className={`${head} pl-[3px]`}>Childre</th>
          <th className={`${head} pl-1`}>Kind</th>
          <th className={`${head} pl-[3px]`}>P</th>
          <th className={`${head} pl-[3px]`}>L</th>
          <th className={head}><PowerIcon /></th>
          <th className={head}>
            <svg className="mx-auto mt-[3px]" width="12" height="8" viewBox="0 0 12 8">
              <path d="M0 4Q6-3 12 4Q6 11 0 4z" fill="#3f73c0" />
              <circle cx="6" cy="4" r="2.200" fill="#8fbcf5" />
            </svg>
          </th>
          <th className={head}>
            <svg className="mx-auto mt-[2px]" width="10" height="10" viewBox="0 0 16 16">
              <path d="M8 0l2 6h6l-5 3.500 2 6L8 12l-5 3.500 2-6L0 6h6z" fill="#d8d8d8" />
            </svg>
          </th>
          <th className={head}><CursorIcon /></th>
        </tr>
      </thead>
      <tbody>
        <tr className={stripe}>
          <td className={cell}>
            <div className="flex h-[18px] items-center">
              <svg width="20" height="18" viewBox="0 0 20 18"><path d="M7.500 0v18M7.500 9.500h9" stroke="#8c8c8c" /></svg>
              <svg width="13" height="16" viewBox="0 0 13 16">
                <path d="M1 14h5" stroke="#555" strokeWidth="2" />
                <circle cx="4.500" cy="7.500" r="4" fill="#b39a10" />
                <circle cx="8.500" cy="4" r="3.800" fill="#f0e36a" />
                <circle cx="5" cy="7" r="2" fill="#f4efa8" />
              </svg>
              <span className="ml-[6px]">Favorites</span>
            </div>
          </td>
          <BlankCells count={9} />
        </tr>
        <tr className={stripe}>
          <td className={cell}>
            <div className="flex h-[18px] items-center">
              <svg width="20" height="18" viewBox="0 0 20 18">
                <path d="M7.500 0v9M8 9.500h9" stroke="#8c8c8c" />
                <Toggle sign="-" cx={7.5} cy={8.5} />
              </svg>
              <span className="ml-[1px]">/</span>
            </div>
          </td>
          <BlankCells count={1} />
          <td className={`${cell} text-right`}>6</td>
          <BlankCells count={7} />
        </tr>
        {sheetRows.map((row, i) => (
          <tr key={row.name} className={stripe}>
            <td className={cell}>
              <div className="flex h-[18px] items-center">
                <svg width="36" height="18" viewBox="0 0 36 18">
                  <path d={i === sheetRows.length - 1 ? 'M25.500 0v9M26 9.500h9' : 'M25.500 0v18M26 9.500h9'} stroke="#8c8c8c" />
                  <Toggle sign="+" cx={25.5} cy={8.5} />
                </svg>
                {row.type === 'Scope' ? <ScopeIcon /> : <StarsIcon />}
                <span className="ml-[5px]">{row.name}</span>
              </div>
            </td>
            <td className={`${cell} pl-[3px]`}>{row.type}</td>
            <td className={`${cell} text-right`}>1</td>
            <td className={`${cell} pl-[3px]`}>{row.kind}</td>
            <BlankCells count={2} />
            <td className={cell}><PowerIcon /></td>
            <td className={cell}><EyeIcon /></td>
            <td className={cell}><span className="mx-auto block h-[2px] w-[2px] bg-[#bbb]" /></td>
            <td className={cell}><CursorIcon /></td>
          </tr>
        ))}
        {Array.from({ length: 6 }, (_, i) => (
          <tr key={i} className={stripe}>
            <BlankCells count={10} />
          </tr>
        ))}
      </tbody>
    </table>
  );
}

function SheetToolbar() {
  return (
    <div className="flex h-[31px] shrink-0 items-center border-t border-l border-t-[#777] border-l-[#555] bg-[#2d2d2d] px-1">
      <IconButton label="Expand" menu>
        <svg width="16" height="16" viewBox="0 0 16 16">
          <path d="M5 0Q16 0 15.500 10L10 16H5Z" fill="#6cc22e" />
          <path d="M1 1h5.500v5H1zM8.500 6H14v5H8.500zM4 10h5v5.500H4z" fill="#f2f2f2" stroke="#222" strokeWidth="0.6" />
          <path d="M2.200 3.500h3M3.700 2v3M9.700 8.500h3M5 12.700h3M6.500 11.200v3" stroke="#222" strokeWidth="0.9" />
        </svg>
      </IconButton>
      <span className="w-[2px]" />
      <IconButton label="Purpose" menu>
        <svg width="12" height="12" viewBox="0 0 12 12">
          <path d="M1 3h10v6q-5 4-10 0z" fill="#8a2028" />
          <ellipse cx="6" cy="3.500" rx="5" ry="2.300" fill="#d8838a" />
          <path d="M1 6.500q5 3 10 0" stroke="#d9a5aa" strokeWidth="1.2" fill="none" />
        </svg>
      </IconButton>
      <span className="w-[2px]" />
      <IconButton label="Mask" menu>
        <svg width="16" height="12" viewBox="0 0 16 12">
          <path d="M0 5q4 1 7 0 5-1 8.500-5 0 7-4 9-2 1-3.500-1-1 3-4 3-3-1-4-6z" fill="#6d3f7c" stroke="#b58cc2" strokeWidth="0.6" />
          <path d="M3 8l3-1M10 5.500l3-1.500" stroke="#eee" strokeWidth="1.6" />
        </svg>
      </IconButton>
      <span className="w-[18px]" />
      <IconButton label="Filters"><SlidersIcon /></IconButton>
      <span className="w-[2px]" />
      <IconButton label="Information"><InfoIcon /></IconButton>
      <span className="w-[2px]" />
      <IconButton label="Find">
        <svg width="16" height="16" viewBox="0 0 16 16" fill="none">
          <circle cx="6.500" cy="6.500" r="5.2" fill="#d9d9d9" stroke="#9c9c9c" strokeWidth="1.4" />
          <circle cx="6.500" cy="7" r="3" fill="#d0262a" />
          <path d="M10 10l5 5" stroke="#b8b8b8" strokeWidth="2.2" />
          <path d="M12 1v7M8.500 4.500h7" stroke="#fff" strokeWidth="2" />
        </svg>
      </IconButton>
      <span className="w-[18px]" />
      <IconButton label="Link selection" active framed>
        <svg width="16" height="16" viewBox="0 0 16 16" fill="none">
          <g stroke="#e8e8e8" strokeWidth="1.2">
            <circle cx="2.500" cy="3" r="2" />
            <circle cx="5" cy="5.500" r="2" />
            <circle cx="7.500" cy="8" r="2" />
            <circle cx="10" cy="10.500" r="2" />
          </g>
          <rect x="10.5" y="11.5" width="5" height="4" fill="#f0d32a" />
        </svg>
      </IconButton>
      <span className="w-[18px]" />
      <IconButton label="Visibility" menu>
        <svg width="16" height="14" viewBox="0 0 16 14" fill="none">
          <path d="M0 1.500q5-1 8 3M0 1l2 4q4-3 7 0l6 5-7 1q-4 0-5-4" stroke="#a6a6a6" strokeWidth="1.5" />
          <circle cx="7.500" cy="8" r="2.500" fill="#222" stroke="#c2c2c2" />
          <circle cx="7" cy="7.500" r="0.900" fill="#eee" />
        </svg>
      </IconButton>
      <span className="flex-1" />
      <IconButton label="Hierarchy" menu>
        <svg width="14" height="16" viewBox="0 0 14 16">
          <path d="M3 3v10M3 6h4M3 10h4M3 13.500h4" stroke="#c8c8c8" />
          <path d="M1 0h4v4H1zM7 4h3v3H7zM7 8.500h3v3H7zM7 12.500h3v3H7zM10.500 4h2v3h-2zM10.500 8.500h2v3h-2z" fill="#d4d4cc" />
        </svg>
      </IconButton>
      <span className="w-[18px]" />
      <IconButton label="Tracking" active framed>
        <svg width="18" height="18" viewBox="0 0 18 18" fill="none">
          <circle cx="9" cy="9" r="6.5" stroke="#dadada" strokeWidth="1.8" />
          <path d="M9 1.500v4M9 12.500v4M1.500 9h4M12.500 9h4" stroke="#dadada" strokeWidth="1.3" />
          <ellipse cx="9" cy="9" rx="4" ry="3" fill="#e3c81f" stroke="#554a10" />
          <path d="M7 9h4" stroke="#554a10" />
        </svg>
      </IconButton>
      <span className="w-[18px]" />
      <IconButton label="Options" menu><GearIcon /></IconButton>
      <span className="w-[2px]" />
      <IconButton label="Snapshot help">
        <svg width="16" height="16" viewBox="0 0 16 16" fill="none">
          <path d="M.5 4h4l1.500-3h4l1.500 3h4v11H.5z" fill="#e2e4cb" />
          <path d="M6 7c0-2 4-2 4 0 0 1.500-2 1.500-2 3.500M8 11.800v1.600" stroke="#222" strokeWidth="1.7" />
        </svg>
      </IconButton>
      <span className="w-[2px]" />
      <IconButton label="Sheet help"><HelpIcon /></IconButton>
    </div>
  );
}

function AttributePanel() {
  return (
    <section className="flex w-[180px] shrink-0 flex-col bg-[#2d2d2d]">
      <div className="flex h-[33px] shrink-0 items-center gap-[2px] bg-[#3a3a3a] pl-[5px]">
        <IconButton label="Tree" active><TreeModeIcon /></IconButton>
        <IconButton label="List">
          <svg width="14" height="12" viewBox="0 0 14 12">
            <path d="M0 1.200h2.500M4 1.200h9M0 4.400h2.500M4 4.400h9M0 7.600h2.500M4 7.600h9M0 10.800h2.500M4 10.800h9" stroke="#e0e0e0" strokeWidth="2" />
          </svg>
        </IconButton>
        <IconButton label="Columns" active>
          <svg width="16" height="14" viewBox="0 0 16 14">
            <path d="M1 0h4v14H1zM11 0h4v14h-4z" fill="#dfdfdf" />
            <path d="M8 2v10" stroke="#dfdfdf" />
          </svg>
        </IconButton>
        <IconButton label="Rows">
          <svg width="13" height="14" viewBox="0 0 13 14">
            <path d="M0 1h13v4H0zM0 9h13v4H0z" fill="#dfdfdf" />
            <path d="M1 7h11" stroke="#999" />
          </svg>
        </IconButton>
        <IconButton label="Transform" active>
          <svg width="18" height="16" viewBox="0 0 18 16">
            <path d="M1 1h4v3H1zM7 1h4v3H7zM13 1h4v3h-4z" fill="#e0e0e0" />
            <text x="9" y="14" textAnchor="middle" fontSize="8" fontWeight="700" fill="#e6e6e6">TRS</text>
          </svg>
        </IconButton>
      </div>
      <table className="w-full table-fixed border-collapse border-t border-[#1c1c1c] text-[12px] leading-5">
        <thead>
          <tr className="bg-gradient-to-b from-[#3a3a3a] to-[#282828]">
            <th className="h-[23px] w-[103px] border-r border-black p-0 pl-[7px] text-left font-normal">Name</th>
            <th className="h-[23px] p-0 pl-1 text-left font-normal">Value</th>
          </tr>
        </thead>
        <tbody>
          <tr className="bg-[#4f402a]">
            <td colSpan={2} className="h-[17px] p-0">
              <svg className="-mt-2 ml-[9px]" width="12" height="10" viewBox="0 0 12 10">
                <path d="M.5 0v9M1 9h11" stroke="#aaa" strokeDasharray="1 1" />
              </svg>
            </td>
          </tr>
        </tbody>
      </table>
    </section>
  );
}

/* Grip drawn in the middle of a splitter bar */
const Grip = ({ vertical = false }: { vertical?: boolean }) =>
  vertical ? (
    <svg width="5" height="66" viewBox="0 0 5 66" fill="#999">
      <path d="M4 0v5L1 2.500zM1 61v5l3-2.500z" />
      <path d="M1 23v20M3.500 23v20" stroke="#999" strokeDasharray="1 1" />
    </svg>
  ) : (
    <svg width="66" height="5" viewBox="0 0 66 5" fill="#999">
      <path d="M0 4h5L2.500 1zM61 1h5l-2.500 3z" />
      <path d="M23 1h20M23 3.500h20" stroke="#999" strokeDasharray="1 1" />
    </svg>
  );

function SpreadsheetPane() {
  return (
    <section className="flex h-[318px] shrink-0 flex-col overflow-hidden">
      <div className="flex h-[19px] shrink-0 items-center border-b border-[#262626] bg-[#2e2e2e]">
        <Tab label="Geometry Spreadsheet" className="w-[129px] bg-[#494949] pl-[7px] pr-[6px]" />
        <AddTab />
      </div>
      <PathBar id="sheet-path" />
      <div className="flex min-h-0 flex-1">
        <div className="flex min-w-0 flex-1 flex-col overflow-hidden border-r border-[#555] bg-[#3a3a3a] pl-[1px] pr-[1px]">
          <SheetToolbar />
          <div className="mt-[1px] flex-1 overflow-hidden border-t border-l border-black pl-[1px]">
            <SceneTable />
          </div>
        </div>
        <div className="flex w-[6px] shrink-0 items-center justify-center border-l border-black bg-[#484848] pt-[111px]">
          <Grip vertical />
        </div>
        <AttributePanel />
      </div>
    </section>
  );
}

export default function App() {
  return (
    <main className="grid h-screen grid-cols-[993fr_961fr] overflow-hidden bg-[#303030] font-['Noto_Sans_CJK_SC',sans-serif] text-[#c6c6c6]">
      <LinkerPane />
      <div className="flex min-w-0">
        <div className="flex w-[5px] shrink-0 items-center justify-center bg-[#484848] pt-[106px]">
          <Grip vertical />
        </div>
        <div className="flex min-w-0 flex-1 flex-col">
          <NetworkPane />
          <div className="flex h-[7px] shrink-0 items-center justify-end border-t border-[#777] bg-[#484848] pr-[154px]">
            <Grip />
          </div>
          <SpreadsheetPane />
        </div>
      </div>
    </main>
  );
}
